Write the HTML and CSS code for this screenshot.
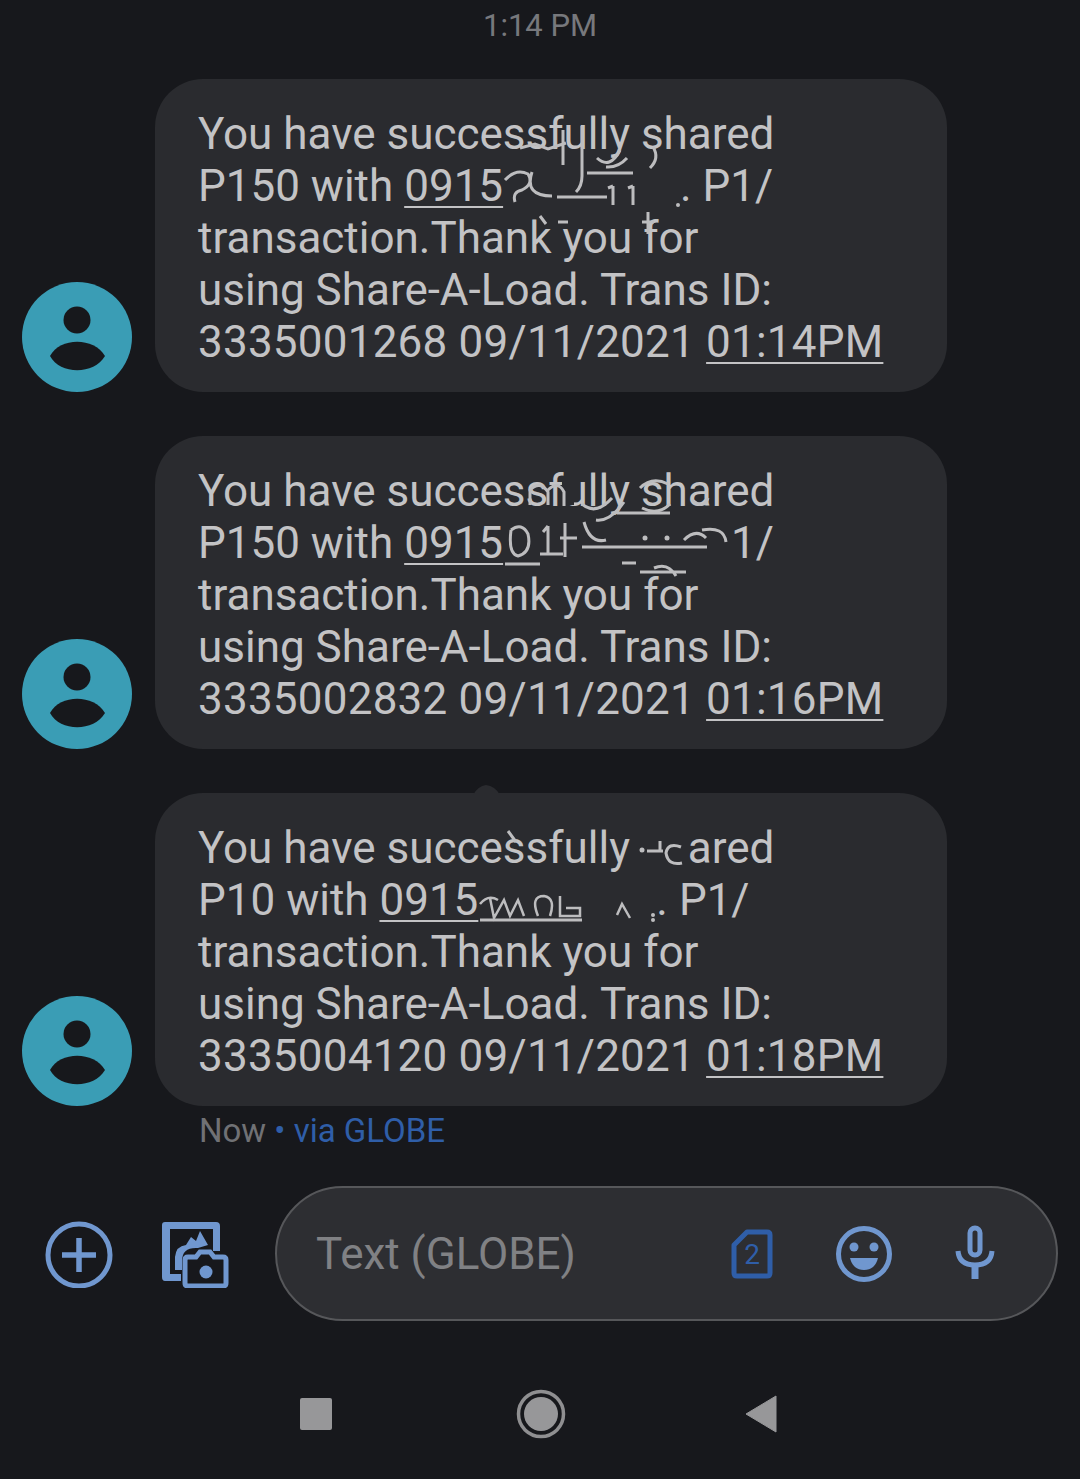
FILE: index.html
```html
<!DOCTYPE html>
<html lang="en">
<head>
    <meta charset="UTF-8">
    <meta name="viewport" content="width=device-width, initial-scale=1.0">
    <title>Messages</title>
    <link rel="stylesheet" href="styles.css">
</head>
<body>

<div class="time">1:14 PM</div>

<div class="thread">
    <div class="message">
        <svg class="avatar" viewBox="0 0 110 110">
            <circle cx="55" cy="55" r="55" fill="#3a9db5"/>
            <circle cx="55" cy="38" r="13.5" fill="#17181c"/>
            <path d="M28 74 C38 55 72 55 83 74 C72 93 38 93 28 74 Z" fill="#17181c"/>
        </svg>
        <div class="bubble">
            You have successfully shared<br>
            P150 with <span class="link">0915</span><span class="hidden-num one"></span>. P1/<br>
            transaction.Thank you for<br>
            using Share-A-Load. Trans ID:<br>
            <span class="digits">3335001268 09/11/2021 <span class="link">01:14PM</span></span>
            <!-- redaction marks, page coordinates -->
            <svg class="marks" viewBox="155 79 792 313">
                <path class="ink" d="M520 148 L535 144 L548 149 L566 143 M563 130 V165 M582 126 V176 Q582 186 576 192 M587 173 H633 M557 197 H607 M597 158 Q610 170 620 150 M606 167 Q618 168 627 158 M653 147 Q660 158 650 168"/>
                <path class="ink" d="M505 180 Q516 168 528 174 Q534 184 522 190 Q512 192 515 202 M532 172 Q524 196 552 196 M613 186 V205 M633 186 V205 M608 188 L613 186 M628 188 L633 186"/>
                <path class="ink" d="M540 216 L546 224 M558 222 H568 M648 212 V234 M642 222 H654"/>
                <circle class="dot" cx="678" cy="205" r="2"/>
            </svg>
        </div>
    </div>
    <div class="message">
        <svg class="avatar" viewBox="0 0 110 110">
            <circle cx="55" cy="55" r="55" fill="#3a9db5"/>
            <circle cx="55" cy="38" r="13.5" fill="#17181c"/>
            <path d="M28 74 C38 55 72 55 83 74 C72 93 38 93 28 74 Z" fill="#17181c"/>
        </svg>
        <div class="bubble">
            You have successfully shared<br>
            P150 with <span class="link">0915</span><span class="hidden-num two"></span>1/<br>
            transaction.Thank you for<br>
            using Share-A-Load. Trans ID:<br>
            <span class="digits">3335002832 09/11/2021 <span class="link">01:16PM</span></span>
            <!-- redaction marks, page coordinates -->
            <svg class="marks" viewBox="155 436 792 313">
                <path class="wipe" d="M568 478 V505"/>
                <path class="ink" d="M530 505 V490 Q540 480 548 492 V505 M548 490 Q558 480 564 492 V506"/>
                <path class="ink" d="M505 564 H540 M540 554 H563 M582 547 H707 M617 513 H670 M565 523 V557 M560 538 H577"/>
                <path class="ink" d="M511 530 Q522 522 528 534 Q532 552 518 556 Q508 554 511 530 M548 526 V555 M543 532 L548 526 M582 504 Q596 516 612 498 M584 522 Q590 544 606 540 M596 520 Q610 522 624 502 M640 488 Q652 476 668 484 M642 508 Q658 516 670 504"/>
                <path class="ink" d="M684 540 Q696 528 706 538 M702 530 Q724 526 726 542 M692 500 Q704 510 708 498 M640 572 H686 M654 568 Q668 562 676 576 M622 563 H636"/>
                <circle class="dot" cx="645" cy="538" r="2.5"/>
                <circle class="dot" cx="667" cy="538" r="2.5"/>
            </svg>
        </div>
    </div>
    <div class="message">
        <svg class="avatar" viewBox="0 0 110 110">
            <circle cx="55" cy="55" r="55" fill="#3a9db5"/>
            <circle cx="55" cy="38" r="13.5" fill="#17181c"/>
            <path d="M28 74 C38 55 72 55 83 74 C72 93 38 93 28 74 Z" fill="#17181c"/>
        </svg>
        <div class="bubble">
            You have successfully shared<br>
            P10 with <span class="link">0915</span><span class="hidden-num three"></span>. P1/<br>
            transaction.Thank you for<br>
            using Share-A-Load. Trans ID:<br>
            <span class="digits">3335004120 09/11/2021 <span class="link">01:18PM</span></span>
            <!-- redaction marks, page coordinates -->
            <svg class="marks" viewBox="155 793 792 313">
                <path class="blob" d="M473 795 Q478 786 486 785 Q495 786 500 795 Z"/>
                <path class="wipe wide" d="M663 826 V868"/>
                <path class="ink" d="M508 831 L516 842 M647 851 H663 M660 841 V850 M681 847 Q668 842 666 853 Q668 866 682 863"/>
                <path class="ink thin" d="M480 904 Q488 894 498 900 M490 898 L494 918 L504 900 L510 916 L518 900 L524 916 M538 916 Q530 896 544 896 Q556 898 550 916 M560 896 V916 H580 V908 H566 M617 915 L622 904 L630 918"/>
                <path class="ink" d="M480 920 H582"/>
                <circle class="dot" cx="653" cy="915" r="2"/>
                <circle class="dot" cx="653" cy="920" r="2"/>
                <circle class="dot" cx="642" cy="850" r="2.5"/>
            </svg>
        </div>
    </div>
</div>

<div class="status">Now <span class="via">• via GLOBE</span></div>

<div class="compose">
    <svg class="tool" width="68" height="68" viewBox="0 0 68 68" fill="none" stroke="#7097cf">
        <circle cx="34" cy="35" r="31" stroke-width="5"/>
        <path d="M34 18 V52 M17 35 H51" stroke-width="5.5"/>
    </svg>
    <svg class="tool" width="68" height="68" viewBox="0 0 68 68">
        <path d="M4 2 H55 Q59 2 59 6 V31 H52 V9 H9 V54 H20 V61 H4 Q1 61 1 57 V5 Q1 2 4 2 Z" fill="#7097cf"/>
        <path d="M14 50 V37 Q15 26 25 25 L30 17 L35 21 L39 11 L47 25 L37 28 Q21 27 21 41 V50 Z" fill="#7097cf"/>
        <path d="M27 37 H35 L39 32 H49 L53 37 H62 Q65 37 65 40 V63 Q65 66 62 66 H27 Q24 66 24 63 V40 Q24 37 27 37 Z" fill="#17181c" stroke="#7097cf" stroke-width="5"/>
        <circle cx="45" cy="52" r="6.5" fill="#7097cf"/>
    </svg>
    <div class="input">
        <span class="placeholder">Text (GLOBE)</span>
        <div class="input-icons">
            <svg width="42" height="50" viewBox="0 0 42 50" fill="none">
                <path d="M16 3 H36 Q39 3 39 6 V44 Q39 47 36 47 H6 Q3 47 3 44 V16 Z" stroke="#2f5ea8" stroke-width="5" stroke-linejoin="round"/>
                <text x="21" y="35" class="sim-num">2</text>
            </svg>
            <svg width="58" height="58" viewBox="0 0 58 58">
                <circle cx="29" cy="29" r="25.5" fill="none" stroke="#7097cf" stroke-width="5"/>
                <circle cx="19" cy="22" r="4.5" fill="#7097cf"/>
                <circle cx="39" cy="22" r="4.5" fill="#7097cf"/>
                <path d="M15 33 H43 Q40 45 29 45 Q18 45 15 33 Z" fill="#7097cf"/>
            </svg>
            <svg class="mic" width="40" height="56" viewBox="0 0 40 56" fill="none" stroke="#7097cf">
                <rect x="15" y="3" width="10" height="27" rx="5" stroke-width="5"/>
                <path d="M3 26 Q4 40 20 40 Q36 40 37 26" stroke-width="5"/>
                <path d="M20 40 V54" stroke-width="7"/>
            </svg>
        </div>
    </div>
</div>

<div class="navbar">
    <div class="nav-square"></div>
    <svg class="nav-home" width="50" height="50" viewBox="0 0 50 50">
        <circle cx="25" cy="25" r="22.5" fill="none" stroke="#8f8f91" stroke-width="3.5"/>
        <circle cx="25" cy="25" r="17" fill="#979799"/>
    </svg>
    <svg width="32" height="38" viewBox="0 0 32 38">
        <path d="M31 1 V37 L1 19 Z" fill="#979799" stroke="#979799" stroke-width="1" stroke-linejoin="round"/>
    </svg>
</div>

</body>
</html>
```

FILE: styles.css
```css
body {
    font-family: Roboto, sans-serif;
    background-color: #17181c;
    margin: 0;
    width: 1080px;
    height: 1479px;
    overflow: hidden;
}

.time {
    height: 79px;
    padding-top: 8px;
    box-sizing: border-box;
    text-align: center;
    font-size: 31px;
    line-height: 36px;
    color: #77787c;
}

.thread {
    display: flex;
    flex-direction: column;
    gap: 44px;
    padding-left: 22px;
}

.message {
    display: flex;
    align-items: flex-end;
    gap: 23px;
}

.avatar {
    width: 110px;
    height: 110px;
    flex-shrink: 0;
}

.bubble {
    position: relative;
    width: 792px;
    height: 313px;
    box-sizing: border-box;
    padding: 29px 0 0 43px;
    background-color: #2a2b2f;
    border-radius: 48px;
    font-size: 44px;
    line-height: 52px;
    color: #c3c3c5;
}

.digits {
    letter-spacing: 0.22px;
}

.link {
    text-decoration: underline;
    text-decoration-thickness: 2px;
    text-underline-offset: 5px;
}

.hidden-num {
    display: inline-block;
}

.hidden-num.one {
    width: 177px;
}

.hidden-num.two {
    width: 228px;
}

.hidden-num.three {
    width: 178px;
}

.marks {
    position: absolute;
    top: 0;
    left: 0;
    width: 792px;
    height: 313px;
    overflow: visible;
}

.ink {
    fill: none;
    stroke: #bdbdbf;
    stroke-width: 3;
}

.ink.thin {
    stroke-width: 2.5;
}

.dot {
    fill: #bdbdbf;
}

.wipe {
    fill: none;
    stroke: #2a2b2f;
    stroke-width: 12;
}

.wipe.wide {
    stroke-width: 46;
}

.blob {
    fill: #2a2b2f;
}

.status {
    padding: 6px 0 0 199px;
    font-size: 33px;
    line-height: 38px;
    color: #707175;
}

.via {
    color: #2f5ea8;
}

.compose {
    display: flex;
    align-items: center;
    margin-top: 36px;
    padding-left: 45px;
}

.tool {
    flex-shrink: 0;
    margin-right: 48px;
}

.input {
    display: flex;
    align-items: center;
    justify-content: space-between;
    width: 783px;
    height: 135px;
    box-sizing: border-box;
    padding: 0 61px 0 39px;
    margin-left: -2px;
    background-color: #2d2e32;
    border: 2px solid #56575a;
    border-radius: 68px;
}

.placeholder {
    font-size: 44px;
    color: #808184;
}

.input-icons {
    display: flex;
    align-items: center;
    gap: 62px;
}

.mic {
    margin-top: -2px;
}

.sim-num {
    font-family: Roboto, sans-serif;
    font-size: 28px;
    fill: #2f5ea8;
    text-anchor: middle;
}

.navbar {
    display: flex;
    align-items: center;
    margin-top: 68px;
    padding-left: 300px;
}

.nav-square {
    width: 32px;
    height: 32px;
    background-color: #979799;
    border-radius: 2px;
}

.nav-home {
    margin: 0 179px 0 184px;
}
```
